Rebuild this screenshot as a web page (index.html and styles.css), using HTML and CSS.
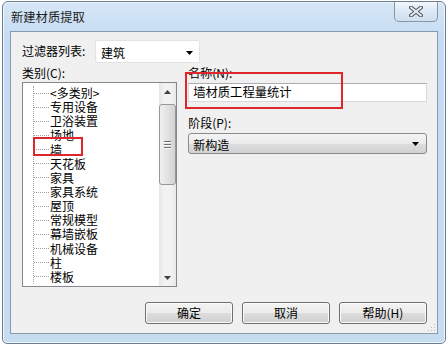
FILE: index.html
```html
<!DOCTYPE html>
<html lang="zh">
<head>
  <meta charset="UTF-8" />
  <title>新建材质提取</title>
  <link rel="stylesheet" href="styles.css">
</head>
<body>
  <div class="window">
    <div class="titlebar">
      <span class="title">新建材质提取</span>
      <div class="close">
        <svg width="14" height="11" viewBox="0 0 14 11">
          <path d="M2 1.5 L12 9.5 M12 1.5 L2 9.5" stroke="#4d5866" stroke-width="4" stroke-linecap="round"/>
          <path d="M2 1.5 L12 9.5 M12 1.5 L2 9.5" stroke="#e8ecf0" stroke-width="2" stroke-linecap="round"/>
        </svg>
      </div>
    </div>

    <div class="client">
      <div class="filter-row">
        <span class="filter-label">过滤器列表:</span>
        <div class="combo">
          <span>建筑</span>
          <svg class="arrow" width="7" height="4" viewBox="0 0 7 4"><path d="M0 0 H7 L3.5 4 Z" fill="#000"/></svg>
        </div>
      </div>

      <div class="main">
        <div class="left">
          <div class="label">类别(C):</div>
          <div class="listbox">
            <div class="tree-wrap">
              <ul class="tree">
                <li><i></i>&lt;多类别&gt;</li>
                <li><i></i>专用设备</li>
                <li><i></i>卫浴装置</li>
                <li><i></i>场地</li>
                <li class="marked"><i></i>墙</li>
                <li><i></i>天花板</li>
                <li><i></i>家具</li>
                <li><i></i>家具系统</li>
                <li><i></i>屋顶</li>
                <li><i></i>常规模型</li>
                <li><i></i>幕墙嵌板</li>
                <li><i></i>机械设备</li>
                <li><i></i>柱</li>
                <li><i></i>楼板</li>
              </ul>
            </div>
            <div class="scrollbar">
              <div class="sb-btn">
                <svg width="7" height="4" viewBox="0 0 7 4"><path d="M0 4 H7 L3.5 0 Z" fill="#404040"/></svg>
              </div>
              <div class="sb-track">
                <div class="thumb"><span></span><span></span><span></span></div>
              </div>
              <div class="sb-btn">
                <svg width="7" height="4" viewBox="0 0 7 4"><path d="M0 0 H7 L3.5 4 Z" fill="#404040"/></svg>
              </div>
            </div>
          </div>
        </div>

        <div class="right">
          <div class="mark-name"></div>
          <div class="label">名称(N):</div>
          <div class="textbox">墙材质工程量统计</div>
          <div class="label phase-label">阶段(P):</div>
          <div class="select">
            <span>新构造</span>
            <svg class="arrow" width="7" height="4" viewBox="0 0 7 4"><path d="M0 0 H7 L3.5 4 Z" fill="#000"/></svg>
          </div>
        </div>
      </div>

      <div class="buttons">
        <div class="btn">确定</div>
        <div class="btn">取消</div>
        <div class="btn">帮助(H)</div>
      </div>

      <svg class="grip" width="10" height="10" viewBox="0 0 10 10">
        <g fill="#b8b8b8">
          <rect x="8" y="2" width="1" height="1"/>
          <rect x="5" y="5" width="1" height="1"/><rect x="8" y="5" width="1" height="1"/>
          <rect x="2" y="8" width="1" height="1"/><rect x="5" y="8" width="1" height="1"/><rect x="8" y="8" width="1" height="1"/>
        </g>
      </svg>
    </div>
  </div>
</body>
</html>
```

FILE: styles.css
```css
body {
  margin: 0;
  background-color: #fff;
  font-family: "Noto Sans CJK SC", "Noto Sans", sans-serif;
  font-size: 12px;
  color: #000;
}
.window {
  box-sizing: border-box;
  width: 444px;
  height: 343px;
  margin: 1px 0 0 2px;
  padding: 0 7px 9px 7px;
  border: 1px solid #6e7f92;
  border-radius: 6px 6px 5px 5px;
  background: linear-gradient(#d6e7f7, #c3dbf2 40px, #c6dcf1);
  box-shadow: inset 0 0 0 1px #eef5fc;
  display: flex;
  flex-direction: column;
}
.titlebar {
  height: 29px;
  display: flex;
  align-items: flex-start;
}
.title {
  margin: 8px 0 0 1px;
  line-height: 14px;
  font-size: 12.3px;
  color: #1e1e1e;
}
.close {
  margin-left: auto;
  width: 44px;
  height: 20px;
  box-sizing: border-box;
  border: 1px solid #8696a9;
  border-top: none;
  border-radius: 0 0 5px 5px;
  background: linear-gradient(#f3f7fb, #dce8f4 50%, #cfdfef);
  display: flex;
  align-items: center;
  justify-content: center;
}
.client {
  position: relative;
  flex: 1;
  box-sizing: border-box;
  border: 1px solid #8a98a8;
  background-color: #f0f0f0;
  padding: 8px 10px 0 11px;
  display: flex;
  flex-direction: column;
}
.filter-row {
  display: flex;
  align-items: center;
  height: 23px;
}
.filter-label {
  width: 73px;
  line-height: 14px;
  margin-top: -2px;
}
.combo {
  box-sizing: border-box;
  width: 105px;
  height: 23px;
  background-color: #fff;
  border: 1px solid #e3e3e3;
  border-radius: 2px;
  display: flex;
  align-items: center;
  padding: 2px 6px 0 5px;
}
.arrow {
  margin-left: auto;
}
.main {
  display: flex;
  margin-top: 3px;
}
.label {
  height: 16px;
  line-height: 14px;
}
.left {
  width: 156px;
}
.listbox {
  box-sizing: border-box;
  height: 205px;
  border: 1px solid #828790;
  background-color: #fff;
  display: flex;
}
.tree-wrap {
  flex: 1;
  overflow: hidden;
  padding: 3px 0 0 10px;
}
.tree {
  list-style: none;
  margin: 0;
  padding: 0;
  border-left: 1px dotted #a0a0a0;
}
.tree li {
  display: flex;
  align-items: center;
  height: 14.15px;
  line-height: 14px;
  white-space: nowrap;
}
.tree li i {
  width: 15px;
  margin-right: 1px;
  border-top: 1px dotted #a0a0a0;
}
.tree li.marked {
  position: relative;
}
.tree li.marked::after {
  content: "";
  position: absolute;
  left: -1px;
  top: -6px;
  width: 50px;
  height: 19px;
  box-sizing: border-box;
  border: 2px solid #e0262c;
}
.scrollbar {
  width: 17px;
  background: linear-gradient(90deg, #e6e6e6, #f2f2f2 30%, #f2f2f2 70%, #e8e8e8);
  display: flex;
  flex-direction: column;
}
.sb-btn {
  height: 17px;
  display: flex;
  align-items: center;
  justify-content: center;
}
.sb-track {
  flex: 1;
  padding-top: 4px;
}
.thumb {
  box-sizing: border-box;
  width: 17px;
  height: 81px;
  border: 1px solid #979797;
  border-radius: 3px;
  background: linear-gradient(90deg, #f0f0f0, #e2e2e2 50%, #d3d3d3);
  display: flex;
  flex-direction: column;
  align-items: center;
  justify-content: center;
  gap: 1px;
}
.thumb span {
  width: 7px;
  height: 1px;
  background-color: #6e6e6e;
  border-bottom: 1px solid #fafafa;
}
.right {
  position: relative;
  margin-left: 11px;
  width: 240px;
}
.right .label {
  height: 17px;
}
.mark-name {
  position: absolute;
  left: -3px;
  top: 6px;
  width: 158px;
  height: 37px;
  box-sizing: border-box;
  border: 2px solid #e0262c;
}
.textbox {
  box-sizing: border-box;
  height: 19px;
  border: 1px solid #d4d9df;
  border-top-color: #abadb3;
  background-color: #fff;
  padding: 0 4px;
  line-height: 17px;
  font-size: 12.3px;
}
.phase-label {
  margin-top: 14px;
}
.select {
  box-sizing: border-box;
  height: 21px;
  border: 1px solid #8a8a8a;
  border-radius: 3px;
  background: linear-gradient(#f4f4f4, #ebebeb 50%, #dddddd 50%, #d2d2d2);
  display: flex;
  align-items: center;
  padding: 1px 7px 0 4px;
}
.buttons {
  display: flex;
  justify-content: flex-end;
  gap: 9px;
  margin-top: 15px;
}
.btn {
  box-sizing: border-box;
  width: 88px;
  height: 22px;
  border: 1px solid #707070;
  border-radius: 3px;
  background: linear-gradient(#f3f3f3, #ebebeb 50%, #dddddd 50%, #cfcfcf);
  box-shadow: inset 0 0 0 1px #fbfbfb;
  text-align: center;
  line-height: 20px;
}
.grip {
  position: absolute;
  right: 1px;
  bottom: 1px;
}
```
